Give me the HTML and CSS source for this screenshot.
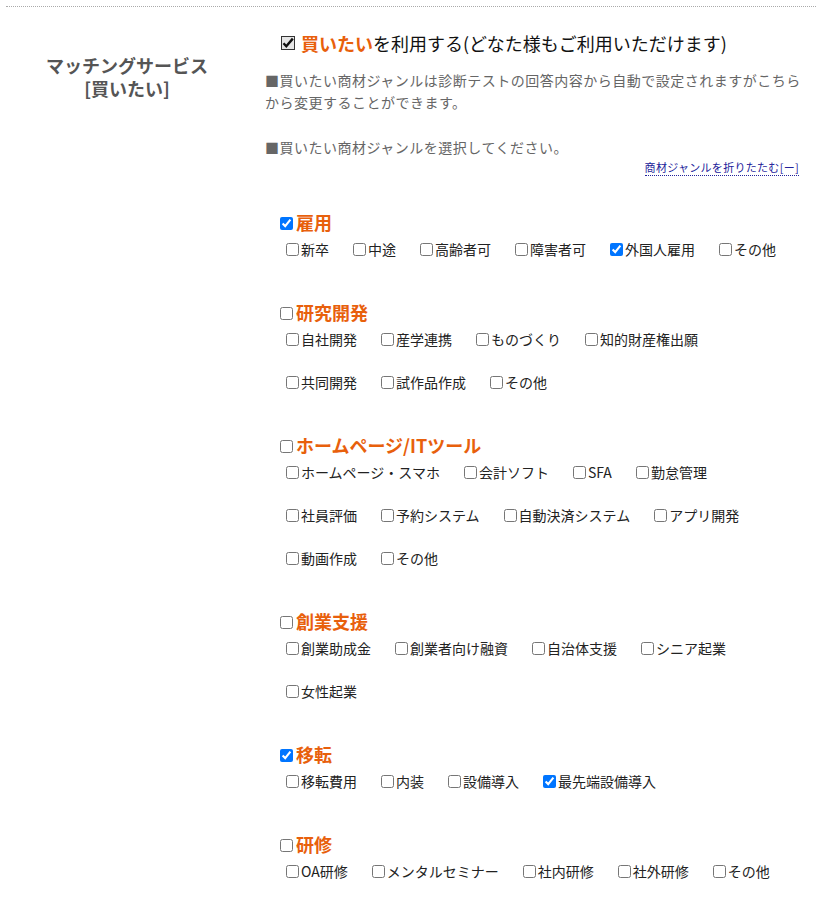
FILE: index.html
```html
<!DOCTYPE html>
<html lang="ja">
<head>
  <meta charset="UTF-8">
  <meta name="viewport" content="width=device-width, initial-scale=1.0">
  <title>マッチングサービス</title>
  <link rel="stylesheet" href="styles.css">
</head>
<body>
  <div class="form-table">
    <div class="form-row">
      <div class="form-label">マッチングサービス<br>[買いたい]</div>
      <div class="form-body">
        <div class="use-line">
          <svg class="use-check" width="14" height="14" viewBox="0 0 14 14">
            <rect x="0.5" y="0.5" width="13" height="13" fill="#e6e6e6" stroke="#333"/>
            <path d="M2.5 7.2 L5.3 10.2 L11.8 2.6" fill="none" stroke="#111" stroke-width="2.4"/>
          </svg>
          <span class="accent">買いたい</span>を利用する(どなた様もご利用いただけます)
        </div>
        <p class="note">■買いたい商材ジャンルは診断テストの回答内容から自動で設定されますがこちらから変更することができます。</p>
        <p class="note note-select">■買いたい商材ジャンルを選択してください。</p>
        <div class="toggle-line"><a href="#" class="toggle-link">商材ジャンルを折りたたむ[ー]</a></div>

        <div class="genre">
          <label class="genre-title"><input type="checkbox" checked>雇用</label>
          <div class="genre-row">
            <label class="item"><input type="checkbox">新卒</label>
            <label class="item"><input type="checkbox">中途</label>
            <label class="item"><input type="checkbox">高齢者可</label>
            <label class="item"><input type="checkbox">障害者可</label>
            <label class="item"><input type="checkbox" checked>外国人雇用</label>
            <label class="item"><input type="checkbox">その他</label>
          </div>
        </div>

        <div class="genre">
          <label class="genre-title"><input type="checkbox">研究開発</label>
          <div class="genre-row">
            <label class="item"><input type="checkbox">自社開発</label>
            <label class="item"><input type="checkbox">産学連携</label>
            <label class="item"><input type="checkbox">ものづくり</label>
            <label class="item"><input type="checkbox">知的財産権出願</label>
          </div>
          <div class="genre-row">
            <label class="item"><input type="checkbox">共同開発</label>
            <label class="item"><input type="checkbox">試作品作成</label>
            <label class="item"><input type="checkbox">その他</label>
          </div>
        </div>

        <div class="genre">
          <label class="genre-title"><input type="checkbox">ホームページ/ITツール</label>
          <div class="genre-row">
            <label class="item"><input type="checkbox">ホームページ・スマホ</label>
            <label class="item"><input type="checkbox">会計ソフト</label>
            <label class="item"><input type="checkbox">SFA</label>
            <label class="item"><input type="checkbox">勤怠管理</label>
          </div>
          <div class="genre-row">
            <label class="item"><input type="checkbox">社員評価</label>
            <label class="item"><input type="checkbox">予約システム</label>
            <label class="item"><input type="checkbox">自動決済システム</label>
            <label class="item"><input type="checkbox">アプリ開発</label>
          </div>
          <div class="genre-row">
            <label class="item"><input type="checkbox">動画作成</label>
            <label class="item"><input type="checkbox">その他</label>
          </div>
        </div>

        <div class="genre">
          <label class="genre-title"><input type="checkbox">創業支援</label>
          <div class="genre-row">
            <label class="item"><input type="checkbox">創業助成金</label>
            <label class="item"><input type="checkbox">創業者向け融資</label>
            <label class="item"><input type="checkbox">自治体支援</label>
            <label class="item"><input type="checkbox">シニア起業</label>
          </div>
          <div class="genre-row">
            <label class="item"><input type="checkbox">女性起業</label>
          </div>
        </div>

        <div class="genre">
          <label class="genre-title"><input type="checkbox" checked>移転</label>
          <div class="genre-row">
            <label class="item"><input type="checkbox">移転費用</label>
            <label class="item"><input type="checkbox">内装</label>
            <label class="item"><input type="checkbox">設備導入</label>
            <label class="item"><input type="checkbox" checked>最先端設備導入</label>
          </div>
        </div>

        <div class="genre">
          <label class="genre-title"><input type="checkbox">研修</label>
          <div class="genre-row">
            <label class="item"><input type="checkbox">OA研修</label>
            <label class="item"><input type="checkbox">メンタルセミナー</label>
            <label class="item"><input type="checkbox">社内研修</label>
            <label class="item"><input type="checkbox">社外研修</label>
            <label class="item"><input type="checkbox">その他</label>
          </div>
        </div>
      </div>
    </div>
  </div>
</body>
</html>
```

FILE: styles.css
```css
body {
  margin: 0;
  background: #fff;
  font-family: "Noto Sans CJK JP", "Noto Sans", sans-serif;
  color: #222;
}

.form-table {
  padding: 6px 19px 0 6px;
}

.form-row {
  display: flex;
  border-top: 1px dotted #aaa;
}

.form-label {
  width: 242px;
  flex-shrink: 0;
  padding-top: 47px;
  text-align: center;
  font-size: 18px;
  font-weight: bold;
  line-height: 23px;
  color: #555;
}

.form-body {
  flex: 1;
  min-width: 0;
  padding: 24px 0 40px 17px;
}

.use-line {
  display: flex;
  align-items: center;
  margin-left: 16px;
  font-size: 18px;
  line-height: 24px;
  color: #111;
}

.use-check {
  margin-right: 6px;
}

.accent {
  color: #e8600c;
  font-weight: bold;
}

.note {
  margin: 14px 0 0;
  width: 545px;
  font-size: 14px;
  line-height: 22px;
  letter-spacing: 0.5px;
  color: #666;
}

.note-select {
  margin-top: 23px;
}

.toggle-line {
  margin-top: 1px;
  padding-right: 17px;
  text-align: right;
  font-size: 11px;
  line-height: 16px;
  letter-spacing: 0.3px;
}

.toggle-link {
  color: #22229a;
  text-decoration: none;
  border-bottom: 1px dotted #22229a;
}

.genre {
  margin-top: 34px;
  margin-left: 11px;
}

.genre + .genre {
  margin-top: 40px;
}

.genre-title {
  display: flex;
  align-items: center;
  font-size: 18px;
  font-weight: bold;
  line-height: 26px;
  color: #e8600c;
}

.genre-title input {
  margin: 3px 3px 0 4px;
}

.genre-row {
  display: flex;
  margin-left: 6px;
  margin-top: 4px;
}

.genre-row + .genre-row {
  margin-top: 23px;
}

.item {
  display: flex;
  align-items: center;
  margin-right: 20px;
  font-size: 14px;
  line-height: 20px;
  color: #222;
}

.item input {
  margin: 0 2px 0 4px;
}
```
